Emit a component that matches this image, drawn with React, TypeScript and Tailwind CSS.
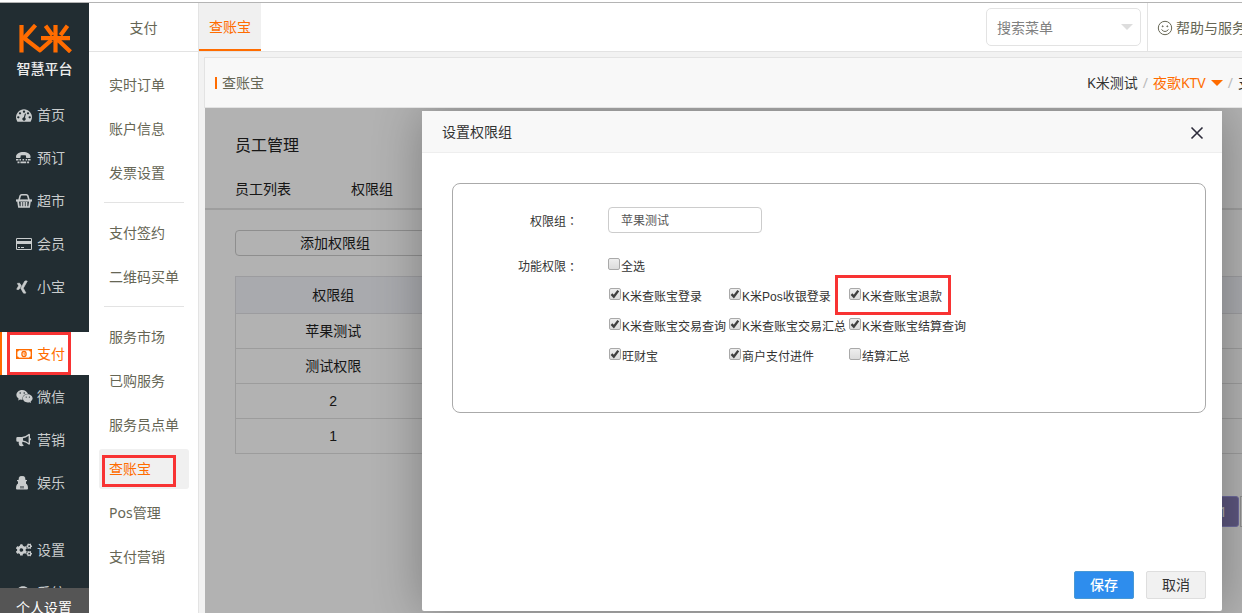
import React from 'react';
import { FaXing, FaWeixin, FaCogs, FaQuestionCircle } from 'react-icons/fa';

const cjk = "font-['Noto_Sans','Noto_Sans_CJK_SC',sans-serif]";
const arial = "font-['Liberation_Sans','Noto_Sans_CJK_SC',sans-serif]";

function Logo() {
  return (
    <svg viewBox="0 0 54 29" className="ml-px h-[29px] w-[54px]" fill="none" stroke="#ff6c00" strokeWidth="4.200" aria-label="K米">
      <path d="M3.500 1v27.500" />
      <path d="M17.500 1.200L6 14 22 26.300 33.500 16" strokeLinejoin="round" />
      <path d="M23 14.200h29M37.500 1v27.500M27.500 1.800l7 9.500M49.500 1.800l-7 9.500M39.500 15.500l13 12.300" />
    </svg>
  );
}

function DashboardIcon() {
  return (
    <svg viewBox="0 0 1792 1792" className="size-4" fill="currentColor">
      <path d="M384 1152q0-53-37.5-90.5t-90.5-37.5-90.5 37.5-37.5 90.5 37.5 90.5 90.5 37.5 90.5-37.5 37.5-90.5zm192-448q0-53-37.5-90.5t-90.5-37.5-90.5 37.5-37.5 90.5 37.5 90.5 90.5 37.5 90.5-37.5 37.5-90.5zm428 481l101-382q6-26-7.5-48.5t-38.5-29.5-48 6.5-30 39.5l-101 382q-60 5-107 43.500t-63 98.500q-20 77 20 146t117 89 146-20 89-117q16-60-6-117t-72-91zm660-33q0-53-37.5-90.5t-90.5-37.5-90.5 37.5-37.5 90.5 37.5 90.5 90.5 37.5 90.5-37.5 37.5-90.5zm-640-640q0-53-37.5-90.5t-90.5-37.5-90.5 37.5-37.5 90.5 37.5 90.5 90.5 37.5 90.5-37.5 37.5-90.5zm448 192q0-53-37.5-90.5t-90.5-37.5-90.5 37.5-37.5 90.5 37.5 90.5 90.5 37.5 90.5-37.5 37.5-90.5zm320 448q0 261-141 483-19 29-54 29h-1402q-35 0-54-29-141-221-141-483 0-182 71-348t191-286 286-191 348-71 348 71 286 191 191 286 71 348z" />
    </svg>
  );
}

function PhoneIcon() {
  return (
    <svg viewBox="0 0 16 16" className="size-4" fill="currentColor">
      <path d="M0 7C0 3.800 3.500 2 7.300 2S14.600 3.800 14.600 7c0 .8-.4 1-1 1H11c-.6 0-1-.3-1-1V5.500C9.500 5 5.100 5 4.600 5.500V7c0 .7-.4 1-1 1H1C.4 8 0 7.800 0 7z" />
      <path d="M0 9h2.500v1.600H0zM3.400 9H5v1.600H3.400zM6.500 9h1.600v1.600H6.500zM9.600 9h1.600v1.600H9.600zM12 9h2.600v1.600H12zM1.500 11.600h2v1.600h-2zM4.400 11.600h5.800v1.600H4.400zM11.100 11.600h2v1.600h-2z" />
    </svg>
  );
}

function BasketIcon() {
  return (
    <svg viewBox="0 0 16 16" className="size-4" fill="none" stroke="currentColor">
      <path d="M3 7L4.200 2.800Q4.500 1.700 5.700 1.700h4.600q1.200 0 1.500 1.100L13 7" strokeWidth="1.600" />
      <path d="M0 7.500h16" strokeWidth="2.200" />
      <path d="M2 8l.9 6h10.200l.9-6M5.500 9v5M8 9v5M10.500 9v5" strokeWidth="1.700" />
    </svg>
  );
}

function CardIcon() {
  return (
    <svg viewBox="0 0 16 16" className="size-4" fill="currentColor">
      <path fillRule="evenodd" d="M1.200 2h13.600A1.200 1.200 0 0 1 16 3.200v9.600a1.200 1.200 0 0 1-1.200 1.200H1.200A1.200 1.200 0 0 1 0 12.800V3.200A1.200 1.200 0 0 1 1.200 2zM1 3v2h14V3zm0 5v5h14V8z" />
      <path d="M2 11h2v1H2zM5 11h3v1H5z" />
    </svg>
  );
}

function MoneyIcon() {
  return (
    <svg viewBox="0 0 16 16" className="size-4" fill="none" stroke="currentColor">
      <rect x=".7" y="3.700" width="14.600" height="8.600" strokeWidth="1.400" />
      <ellipse cx="8" cy="8" rx="2.100" ry="2.600" strokeWidth="1.300" />
      <path d="M7.500 7l.7-.5v3" strokeWidth=".9" />
      <path d="M.5 3.500h2.600q0 2.200-2.600 2.200zM15.500 3.500h-2.600q0 2.200 2.600 2.200zM.5 12.500h2.600q0-2.200-2.600-2.200zM15.500 12.500h-2.600q0-2.200 2.600-2.200z" fill="currentColor" stroke="none" />
    </svg>
  );
}

function BullhornIcon() {
  return (
    <svg viewBox="0 0 16 16" className="size-4" fill="currentColor">
      <path fillRule="evenodd" d="M13 1.800q1 0 1 1v3.100q1 .3 1 1.300t-1 1.300v3.200q0 1-1 1-3-2.600-6.200-2.900-.9.300-.5 1.200-.2.800.3 1.300.4.600 1.200 1-.5 1-2.200 1t-2.300-.7Q2.300 11.500 2.800 9.800H1.500Q.3 9.800.3 8.500V6.200q0-1.300 1.200-1.300h4.300Q9.700 4.800 13 1.800zm-.4 2Q9.800 5.900 7 6.200v2.400q2.800.3 5.600 2.500z" />
    </svg>
  );
}

function AgentIcon() {
  return (
    <svg viewBox="0 0 12 16" className="h-4 w-3" fill="currentColor">
      <path d="M2.500 5L3 2.400Q3.400 1 6 1t3 1.400L9.500 5z" />
      <path d="M1 5h10v1.200H1zM2 6.200h8V9L8.300 10H3.700L2 9z" />
      <path fillRule="evenodd" d="M2.500 8.300L6 10l3.500-1.700q2.500 1 2.500 5.300 0 1-1 1H1q-1 0-1-1 0-4.300 2.500-5.300zm2 2.700v2.600h1V11zm2 0v2.600h1V11z" />
    </svg>
  );
}

function SmileIcon() {
  return (
    <svg viewBox="0 0 16 16" className="size-4 shrink-0" fill="none" stroke="#666655">
      <circle cx="8" cy="8" r="6.700" />
      <circle cx="5.700" cy="6.300" r=".5" fill="#666655" />
      <circle cx="10.300" cy="6.300" r=".5" fill="#666655" />
      <path d="M4.500 9.500Q8 13.500 11.500 9.500" />
    </svg>
  );
}

function Caret({ className }: { className: string }) {
  return (
    <svg viewBox="0 0 12 6" className={className} fill="currentColor">
      <path d="M0 0h12L6 6z" />
    </svg>
  );
}

type NavItem = { label: string; icon: React.ReactNode; active?: boolean };

const navGroups: NavItem[][] = [
  [
    { label: '首页', icon: <DashboardIcon /> },
    { label: '预订', icon: <PhoneIcon /> },
    { label: '超市', icon: <BasketIcon /> },
    { label: '会员', icon: <CardIcon /> },
    { label: '小宝', icon: <FaXing className="h-[14px] w-3" stroke="currentColor" strokeWidth="24" /> },
  ],
  [
    { label: '支付', icon: <MoneyIcon />, active: true },
    { label: '微信', icon: <FaWeixin className="size-[17px]" /> },
    { label: '营销', icon: <BullhornIcon /> },
    { label: '娱乐', icon: <AgentIcon /> },
  ],
  [
    { label: '设置', icon: <FaCogs className="size-4" /> },
    { label: '系统', icon: <FaQuestionCircle className="size-[14px]" /> },
  ],
];

function NavLink({ item }: { item: NavItem }) {
  return (
    <a
      href="#"
      className={
        item.active
          ? 'relative flex h-[43px] items-center bg-white pl-4 text-[#ff6c00]'
          : 'flex h-[43px] items-center pl-4 text-[#c9cccd]'
      }
    >
      {item.active && (
        <>
          <span className="absolute inset-y-0 left-0 w-[2px] bg-[#ff6c00]" />
          <span className="absolute inset-y-0 left-[7px] w-16 border-3 border-[#f83333]" />
        </>
      )}
      <span className="flex w-[21px] shrink-0 items-center">{item.icon}</span>
      {item.label}
    </a>
  );
}

const subMenu = [
  ['实时订单', '账户信息', '发票设置'],
  ['支付签约', '二维码买单'],
  ['服务市场', '已购服务', '服务员点单', '查账宝', 'Pos管理', '支付营销'],
];

const permissions = [
  { label: 'K米查账宝登录', on: true },
  { label: 'K米Pos收银登录', on: true },
  { label: 'K米查账宝退款', on: true, marked: true },
  { label: 'K米查账宝交易查询', on: true },
  { label: 'K米查账宝交易汇总', on: true },
  { label: 'K米查账宝结算查询', on: true },
  { label: '旺财宝', on: true },
  { label: '商户支付进件', on: true },
  { label: '结算汇总', on: false },
];

function Colon() {
  return <span className="font-['Noto_Sans_CJK_TC',sans-serif]">：</span>;
}

function Check({ label, on }: { label: string; on: boolean }) {
  return (
    <label className="flex h-[30px] items-center whitespace-nowrap">
      <span className="mb-1 grid shrink-0">
        <input
          type="checkbox"
          defaultChecked={on}
          className="peer col-start-1 row-start-1 size-3 appearance-none rounded-[2px] border border-[#a9a9a9] bg-linear-to-b from-[#eeeeee] to-[#dcdcdc]"
        />
        <svg
          viewBox="0 0 12 12"
          className="pointer-events-none invisible col-start-1 row-start-1 size-3 peer-checked:visible"
          fill="none"
          stroke="#404040"
          strokeWidth="2.400"
        >
          <path d="M2.500 6.200l2.300 2.400 4.500-6" />
        </svg>
      </span>
      <span className="pt-[2px] pl-px">{label}</span>
    </label>
  );
}

function Dialog() {
  return (
    <div
      role="dialog"
      aria-labelledby="dialog-title"
      className="flex h-[500px] w-[800px] max-w-full flex-col rounded-[2px] bg-white shadow-[1px_1px_50px_rgba(0,0,0,0.3)]"
    >
      <div className="flex h-[42px] shrink-0 items-center justify-between border-b border-[#eeeeee] bg-[#f8f8f8] pr-[18px] pl-5">
        <h2 id="dialog-title" className="text-sm text-[#333333]">设置权限组</h2>
        <button type="button" aria-label="关闭" className="mt-[2px]">
          <svg viewBox="0 0 14 14" className="size-[14px]" fill="none" stroke="#2d2c3b" strokeWidth="1.600">
            <path d="M1.500 1.500l11 11M12.500 1.500l-11 11" />
          </svg>
        </button>
      </div>
      <form className={`${arial} flex flex-1 flex-col justify-between pt-[30px] pr-4 pb-3 pl-[30px] text-xs text-[#333333]`}>
        <div className="h-[230px] rounded-lg border border-[#aaaaaa] pt-[23px]">
          <div className="flex items-center">
            <label htmlFor="group-name" className="w-[125px] pt-[2px] text-right">权限组<Colon /></label>
            <input
              id="group-name"
              defaultValue="苹果测试"
              className="ml-[30px] h-[26px] w-[154px] rounded-[4px] border border-[#cccccc] px-3 pb-px text-xs text-[#555555]"
            />
          </div>
          <div className="mt-[18px] flex">
            <span className="flex h-[30px] w-[125px] items-center justify-end pt-[2px]">功能权限<Colon /></span>
            <div className="ml-[30px]">
              <Check label="全选" on={false} />
              <div className="grid grid-cols-[120px_120px_120px] pl-px">
                {permissions.map((p) => (
                  <div key={p.label} className="relative">
                    <Check label={p.label} on={p.on} />
                    {p.marked && (
                      <span className="pointer-events-none absolute -top-[6px] -left-[14px] h-10 w-[116px] border-3 border-[#f83333]" />
                    )}
                  </div>
                ))}
              </div>
            </div>
          </div>
        </div>
        <div className={`${cjk} flex justify-end gap-3 text-sm`}>
          <button type="button" className="h-7 w-[60px] rounded-[2px] border border-[#4898d5] bg-[#2e8ded] font-medium text-white">保存</button>
          <button type="button" className="h-7 w-[60px] rounded-[2px] border border-[#dedede] bg-[#f1f1f1] text-[#333333]">取消</button>
        </div>
      </form>
    </div>
  );
}

function StaffPage() {
  return (
    <div className="h-full bg-white text-sm text-[#222222]">
      <div className="border-b-2 border-[#e2e2e2] pl-[30px]">
        <h1 className="pt-[25px] text-base leading-6">员工管理</h1>
        <div className="flex gap-[60px] pt-[22px] pb-[9px]">
          <a href="#" className="leading-5">员工列表</a>
          <a href="#" className="leading-5">权限组</a>
        </div>
      </div>
      <div className="pt-5 pl-[30px]">
        <button type="button" className="h-[26px] w-[200px] rounded-[4px] border border-[#cccccc]">添加权限组</button>
        <table className={`${arial} mt-5 w-full border-collapse text-center`}>
          <thead>
            <tr className="h-[37px] bg-[#f2f4fa]">
              <th className="w-[195px] border-y border-l border-[#e0e0e4] font-normal">权限组</th>
              <th className="border-y border-[#e0e0e4] font-normal" />
            </tr>
          </thead>
          <tbody>
            {['苹果测试', '测试权限', '2', '1'].map((name) => (
              <tr key={name} className="h-[35px]">
                <td className="border-y border-l border-[#e0e0e0]">{name}</td>
                <td className="border-y border-[#e0e0e0]" />
              </tr>
            ))}
          </tbody>
        </table>
        <div className="mt-[42px] flex justify-end gap-px">
          <button type="button" className="h-[31px] w-8 rounded-[3px] border border-[#9c98e0] bg-[#857bb5] text-white">1</button>
          <button type="button" aria-label="下一页" className="h-[31px] w-[2px] border-y border-l border-[#cccccc]" />
        </div>
      </div>
    </div>
  );
}

export default function App() {
  return (
    <div className={`${cjk} flex h-screen flex-col overflow-hidden bg-white pt-[2px] text-sm`}>
      <div className="h-px shrink-0 bg-[#b4b4b4]" />
      <div className="flex min-h-0 flex-1">
        <aside className="flex w-[89px] shrink-0 flex-col bg-[#222d32]">
          <div className="flex h-[90px] shrink-0 flex-col items-center pt-[21px]">
            <Logo />
            <span className="mt-2 text-sm leading-4 font-medium text-[#eeeeee]">智慧平台</span>
          </div>
          <nav className="flex min-h-0 flex-1 flex-col gap-6 overflow-hidden">
            {navGroups.map((group, i) => (
              <div key={i} className="shrink-0">
                {group.map((item) => (
                  <NavLink key={item.label} item={item} />
                ))}
              </div>
            ))}
          </nav>
          <a href="#" className="h-[25px] shrink-0 overflow-hidden bg-[#555555] pt-[10px] pl-4 leading-5 whitespace-nowrap text-white">
            个人设置
          </a>
        </aside>

        <aside className="w-[110px] shrink-0 overflow-hidden border-r border-[#e3e3e3] bg-white text-[#666655]">
          <div className="flex h-[49px] items-center justify-center border-b border-[#e3e3e3] pt-[2px]">支付</div>
          <nav className="flex flex-col gap-1 pt-[13px]">
            {subMenu.map((group, i) => (
              <React.Fragment key={i}>
                {i > 0 && (
                  <div className="h-3 pt-[5px] pr-[14px] pl-[15px]">
                    <hr className="border-[#e3e3e3]" />
                  </div>
                )}
                {group.map((name) =>
                  name === '查账宝' ? (
                    <a key={name} href="#" className="relative mr-[9px] ml-[10px] flex h-10 items-center rounded-[3px] bg-[#f0f0f0] pl-[10px] text-[#ff6c00]">
                      {name}
                      <span className="absolute top-[6px] left-[3px] h-8 w-[74px] border-3 border-[#f83333]" />
                    </a>
                  ) : (
                    <a key={name} href="#" className="flex h-10 items-center pl-5 whitespace-nowrap">{name}</a>
                  ),
                )}
              </React.Fragment>
            ))}
          </nav>
        </aside>

        <main className="flex min-w-0 flex-1 flex-col bg-[#f2f2f2]">
          <header className="flex h-[49px] shrink-0 items-stretch border-b border-[#e3e3e3] bg-white">
            <a href="#" className="flex items-center border-b-2 border-[#ff6c00] bg-[#f0f0f0] px-[10px] pt-[2px] text-[#ff6c00]">查账宝</a>
            <div className="relative mt-[5px] mr-[6px] ml-auto h-[38px] w-[155px]">
              <input
                aria-label="搜索菜单"
                placeholder="搜索菜单"
                className="h-full w-full rounded-[5px] border border-[#e3e3e3] pl-[10px] text-sm placeholder:text-[#808080]"
              />
              <Caret className="absolute top-4 right-2 h-[6px] w-3 text-[#dddddd]" />
            </div>
            <a href="#" className="flex w-[95px] items-center gap-[3px] overflow-hidden border-l border-[#e3e3e3] pt-[2px] pl-[9px] whitespace-nowrap text-[#666655]">
              <SmileIcon />
              帮助与服务
            </a>
          </header>

          <div className="flex min-h-0 flex-1 flex-col pt-[5px] pl-[5px]">
            <div className="flex h-[51px] shrink-0 items-center border-y border-l border-[#e3e3e3] bg-[#f8f8f8] pl-[10px]">
              <span className="h-3 w-[2px] bg-[#ff6c00]" />
              <span className="ml-[5px] text-[#666655]">查账宝</span>
              <div className="ml-auto flex w-[155px] items-center overflow-hidden whitespace-nowrap text-[#333333]">
                <span>K米测试</span>
                <span className="mx-[5px] text-[#bbbbbb]">/</span>
                <a href="#" className="flex items-center gap-[5px] text-[#ff6c00]">
                  夜歌KTV
                  <Caret className="h-[6px] w-3" />
                </a>
                <span className="mx-[5px] text-[#bbbbbb]">/</span>
                <span>支付</span>
              </div>
            </div>
            <div className="relative ml-px min-h-0 flex-1 overflow-hidden">
              <StaffPage />
              <div className="absolute inset-0 flex items-start justify-end bg-black/30 pt-[3px] pr-5">
                <Dialog />
              </div>
            </div>
          </div>
        </main>
      </div>
    </div>
  );
}
